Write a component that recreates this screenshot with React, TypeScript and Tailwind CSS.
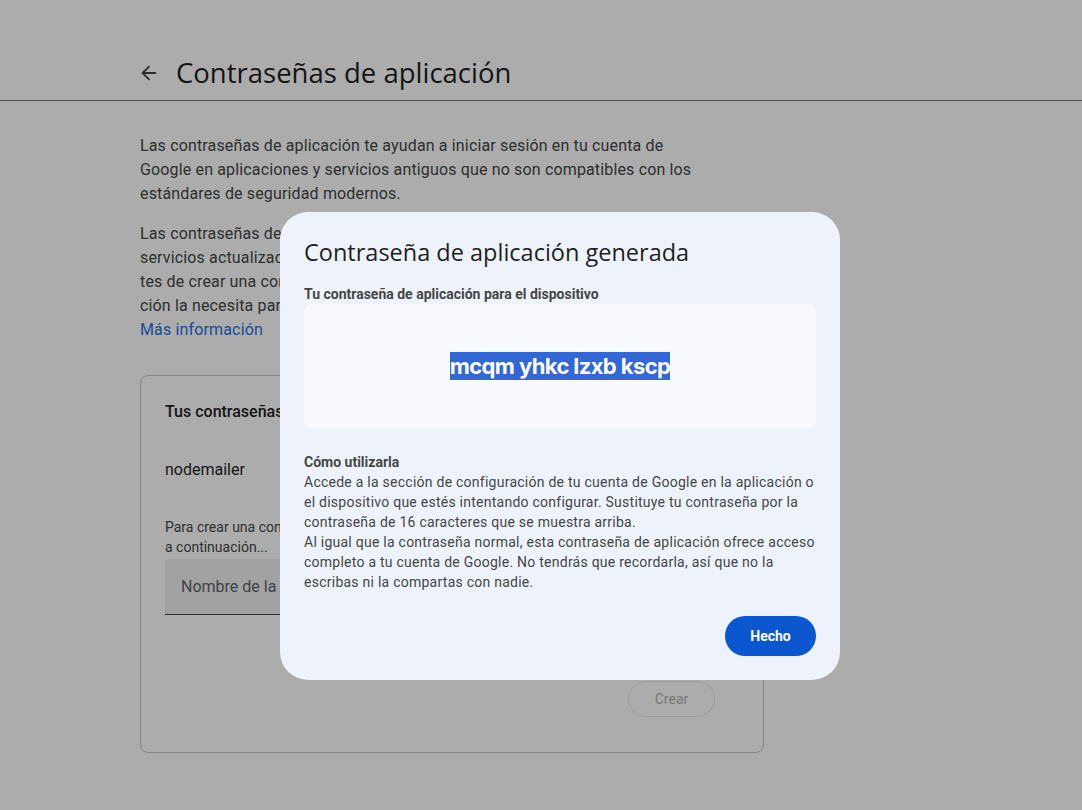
import { ArrowLeft } from "lucide-react"

const sans = { fontFamily: "Roboto, 'Open Sans', Arial, sans-serif" }
const display = { fontFamily: "'Open Sans', Roboto, Arial, sans-serif" }

function Background() {
  return (
    <div className="min-h-[810px] bg-white text-[#1f1f1f]" style={sans}>
      <header className="border-b border-[#747775] h-[101px] flex items-end pb-[7px] pl-[138px] gap-[16px]">
        <ArrowLeft className="w-[22px] h-[22px] mb-[9px] text-[#444746]" strokeWidth={2} />
        <h1 className="text-[27.5px] leading-[40px]" style={display}>
          Contraseñas de aplicación
        </h1>
      </header>

      <main className="pl-[140px] pt-[33px] w-[720px]">
        <p className="text-[16px] leading-[24px] tracking-[0.15px] text-[#444746] w-[560px]">
          Las contraseñas de aplicación te ayudan a iniciar sesión en tu cuenta de Google en aplicaciones y servicios
          antiguos que no son compatibles con los estándares de seguridad modernos.
        </p>
        <p className="mt-[16px] text-[16px] leading-[24px] tracking-[0.15px] text-[#444746]">
          <span className="block whitespace-nowrap">Las contraseñas de aplicación no son recomendables y no son necesarias en</span>
          <span className="block whitespace-nowrap">servicios actualizados que usan estándares de seguridad modernos. An-</span>
          <span className="block whitespace-nowrap">tes de crear una contraseña de aplicación, comprueba si tu aplica-</span>
          <span className="block whitespace-nowrap">ción la necesita para iniciar sesión.</span>
        </p>
        <a className="block text-[16px] leading-[24px] tracking-[0.15px] text-[#1a73e8]">Más información</a>

        <section className="mt-[33px] w-[624px] h-[378px] border border-[#c4c7c5] rounded-[8px] px-[24px] pt-[24px]">
          <h2 className="text-[16px] font-medium leading-[24px]">Tus contraseñas de aplicación</h2>
          <div className="mt-[34px] text-[16px] leading-[24px]">nodemailer</div>
          <p className="mt-[35px] text-[14px] leading-[20px] text-[#444746] w-[440px]">
            Para crear una contraseña específica de aplicación, escribe un nombre a continuación...
          </p>
          <div className="mt-[2px] w-[420px] h-[56px] bg-[#f0f0f0] border-b border-[#444746] rounded-t-[4px] flex items-center px-[16px] text-[16px] text-[#5f6368]">
            Nombre de la app
          </div>
          <div className="flex justify-end mt-[66px] pr-[24px]">
            <button className="h-[36px] w-[87px] rounded-full border border-[#1f1f1f]/[0.12] text-[14px] text-[#1f1f1f]/[0.38]">
              Crear
            </button>
          </div>
        </section>
      </main>
    </div>
  )
}

function Dialog() {
  return (
    <div className="absolute left-[280px] top-[212px] w-[560px] h-[468px] bg-[#eef3fb] rounded-[28px] px-[24px] pt-[24px] text-[#1f1f1f]" style={sans}>
      <h2 className="text-[23.5px] leading-[32px]" style={display}>
        Contraseña de aplicación generada
      </h2>
      <div className="mt-[18px] text-[14px] leading-[16px] font-bold text-[#444746]">
        Tu contraseña de aplicación para el dispositivo
      </div>
      <div className="mt-[2px] h-[124px] rounded-[8px] bg-[#f8faff] flex items-center justify-center">
        <span className="bg-[#3367d6] text-white text-[22px] leading-[28px] font-bold tracking-[-0.6px]" style={{ fontFamily: "Inter, Roboto, sans-serif" }}>
          mcqm yhkc lzxb kscp
        </span>
      </div>
      <div className="mt-[24px] text-[14px] leading-[20px] tracking-[0.25px] text-[#444746]">
        <div className="font-bold tracking-normal">Cómo utilizarla</div>
        <p>
          Accede a la sección de configuración de tu cuenta de Google en la aplicación o el dispositivo que estés
          intentando configurar. Sustituye tu contraseña por la contraseña de 16 caracteres que se muestra arriba.
        </p>
        <p>
          Al igual que la contraseña normal, esta contraseña de aplicación ofrece acceso completo a tu cuenta de
          Google. No tendrás que recordarla, así que no la escribas ni la compartas con nadie.
        </p>
      </div>
      <div className="flex justify-end mt-[24px]">
        <button className="h-[40px] w-[91px] rounded-full bg-[#0b57d0] text-white text-[14px] font-bold">Hecho</button>
      </div>
    </div>
  )
}

export default function App() {
  return (
    <div className="relative h-[810px] overflow-hidden">
      <Background />
      <div className="absolute inset-0 bg-black/[0.325]" />
      <Dialog />
    </div>
  )
}
